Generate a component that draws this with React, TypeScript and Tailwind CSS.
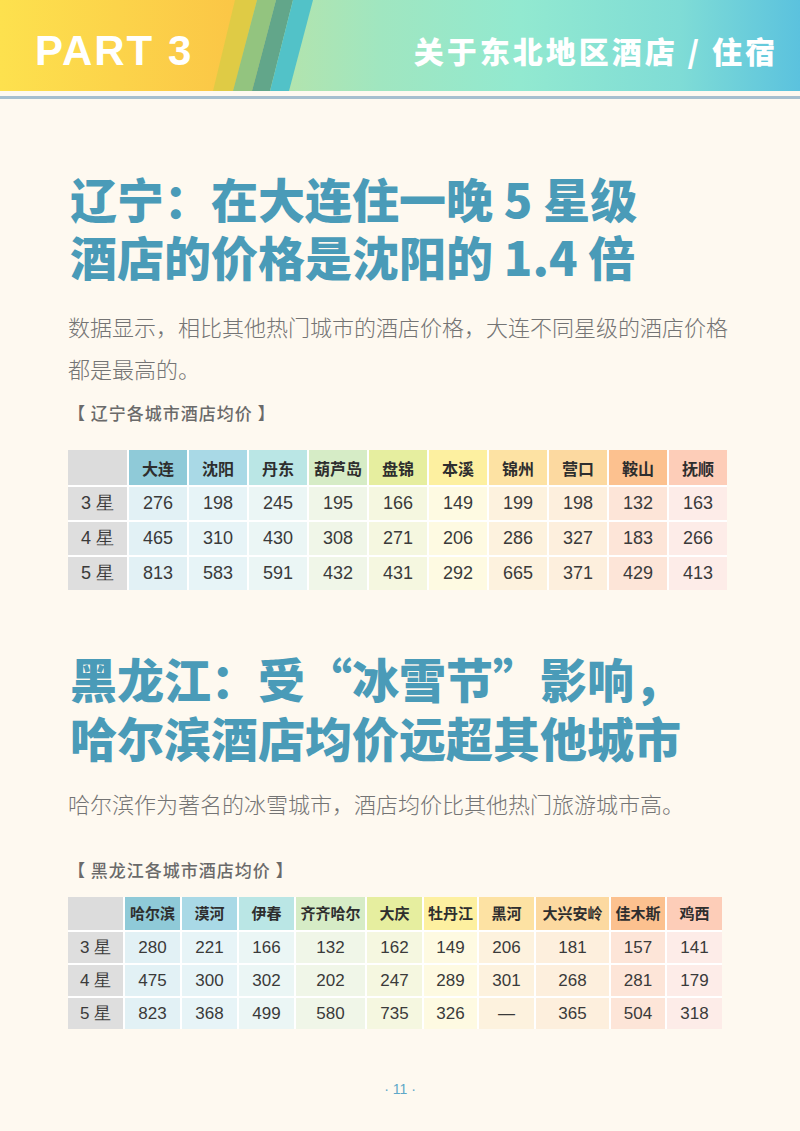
const liaoning = {
  cols: [
    { name: '大连', head: 'bg-[#8fcad8]', body: 'bg-[#e2f1f5]' },
    { name: '沈阳', head: 'bg-[#a9d9e6]', body: 'bg-[#e7f4f7]' },
    { name: '丹东', head: 'bg-[#bae6e5]', body: 'bg-[#ebf6f5]' },
    { name: '葫芦岛', head: 'bg-[#d6ecc6]', body: 'bg-[#f0f6e8]' },
    { name: '盘锦', head: 'bg-[#e6ee9f]', body: 'bg-[#f5f7e0]' },
    { name: '本溪', head: 'bg-[#fdf0a0]', body: 'bg-[#fefae2]' },
    { name: '锦州', head: 'bg-[#fde2a3]', body: 'bg-[#fdf2de]' },
    { name: '营口', head: 'bg-[#fcd9a0]', body: 'bg-[#fdefdd]' },
    { name: '鞍山', head: 'bg-[#fcc18f]', body: 'bg-[#fde5d8]' },
    { name: '抚顺', head: 'bg-[#fdcdb8]', body: 'bg-[#fdece8]' },
  ],
  rows: [
    ['3 星', '276', '198', '245', '195', '166', '149', '199', '198', '132', '163'],
    ['4 星', '465', '310', '430', '308', '271', '206', '286', '327', '183', '266'],
    ['5 星', '813', '583', '591', '432', '431', '292', '665', '371', '429', '413'],
  ],
};

const heilongjiang = {
  cols: [
    { name: '哈尔滨', head: 'bg-[#8fcad8]', body: 'bg-[#e2f1f5]' },
    { name: '漠河', head: 'bg-[#a9d9e6]', body: 'bg-[#e7f4f7]' },
    { name: '伊春', head: 'bg-[#bae6e5]', body: 'bg-[#ebf6f5]' },
    { name: '齐齐哈尔', head: 'bg-[#d6ecc6]', body: 'bg-[#f0f6e8]' },
    { name: '大庆', head: 'bg-[#e6ee9f]', body: 'bg-[#f5f7e0]' },
    { name: '牡丹江', head: 'bg-[#fdf0a0]', body: 'bg-[#fefae2]' },
    { name: '黑河', head: 'bg-[#fde2a3]', body: 'bg-[#fdf2de]' },
    { name: '大兴安岭', head: 'bg-[#fcd9a0]', body: 'bg-[#fdefdd]' },
    { name: '佳木斯', head: 'bg-[#fcc18f]', body: 'bg-[#fde5d8]' },
    { name: '鸡西', head: 'bg-[#fdcdb8]', body: 'bg-[#fdece8]' },
  ],
  rows: [
    ['3 星', '280', '221', '166', '132', '162', '149', '206', '181', '157', '141'],
    ['4 星', '475', '300', '302', '202', '247', '289', '301', '268', '281', '179'],
    ['5 星', '823', '368', '499', '580', '735', '326', '—', '365', '504', '318'],
  ],
};

type TableData = typeof liaoning;

function PriceTable({
  data,
  gridCols,
  headH,
  rowH,
  headText,
  bodyText,
}: {
  data: TableData;
  gridCols: string;
  headH: string;
  rowH: string;
  headText: string;
  bodyText: string;
}) {
  return (
    <div className={`grid ${gridCols} gap-[2px] bg-white w-max`}>
      <div className={`${headH} bg-[#dcdcdc]`} />
      {data.cols.map((c) => (
        <div
          key={c.name}
          className={`${headH} ${c.head} ${headText} flex items-center justify-center font-bold text-[#2e2e2e] whitespace-nowrap`}
        >
          {c.name}
        </div>
      ))}
      {data.rows.map((r) =>
        r.map((v, i) => (
          <div
            key={r[0] + i}
            className={`${rowH} ${i === 0 ? 'bg-[#dedede]' : data.cols[i - 1].body} ${bodyText} flex items-center justify-center text-[#3a3a3a]`}
          >
            {v}
          </div>
        ))
      )}
    </div>
  );
}

function Header() {
  return (
    <div className="relative h-[91px] bg-[linear-gradient(90deg,#fde14e_0px,#fbc646_236px,#b2e4ae_289px,#a0e6c0_380px,#92e9d0_520px,#7fdcd6_680px,#5bc2de_800px)]">
      <svg className="absolute inset-0" width="800" height="91" viewBox="0 0 800 91">
        <polygon points="235,0 257,0 233,91 213,91" fill="#dfcb45" />
        <polygon points="257,0 276,0 252,91 233,91" fill="#93c47f" />
        <polygon points="276,0 293,0 270,91 252,91" fill="#62a68a" />
        <polygon points="293,0 313,0 289,91 270,91" fill="#52c2c8" />
      </svg>
      <div className="relative h-full flex items-center justify-between pl-[35px] pr-[22px]">
        <div className="text-white text-[42px] font-black tracking-[2px] font-['Liberation_Sans',sans-serif] leading-none pt-[10px]">
          PART 3
        </div>
        <div className="text-white text-[30px] font-black tracking-[3px] font-['Noto_Sans_CJK_SC',sans-serif] leading-none pt-[8px]">
          关于东北地区酒店 / 住宿
        </div>
      </div>
    </div>
  );
}

function Heading({ lines, leading }: { lines: string[]; leading: string }) {
  return (
    <h1 className={`text-[47px] ${leading} font-black text-[#4a9bb8] pl-[2px]`}>
      {lines.map((l) => (
        <div key={l}>{l}</div>
      ))}
    </h1>
  );
}

export default function App() {
  return (
    <div className="w-[800px] h-[1131px] bg-[#fef9f0] font-['Noto_Sans_CJK_SC',sans-serif] overflow-hidden">
      <Header />
      <div className="mt-[5px] h-[3px] bg-[#a6bfcf]" />

      <div className="pl-[68px] flex flex-col">
        {/* Liaoning */}
        <div className="mt-[70px]">
          <Heading lines={['辽宁：在大连住一晚 5 星级', '酒店的价格是沈阳的 1.4 倍']} leading="leading-[58px]" />
        </div>
        <p className="mt-[20px] text-[22px] leading-[42px] font-light text-[#747474]">
          数据显示，相比其他热门城市的酒店价格，大连不同星级的酒店价格
          <br />
          都是最高的。
        </p>
        <div className="mt-[12px] text-[17px] leading-[24px] font-medium tracking-[1px] text-[#6a6a6a]">
          【 辽宁各城市酒店均价 】
        </div>
        <div className="mt-[25px]">
          <PriceTable
            data={liaoning}
            gridCols="grid-cols-[59px_repeat(10,58px)]"
            headH="h-[35px]"
            rowH="h-[33px]"
            headText="text-[16px]"
            bodyText="text-[18px] font-['Liberation_Sans',sans-serif]"
          />
        </div>

        {/* Heilongjiang */}
        <div className="mt-[58px]">
          <Heading lines={['黑龙江：受“冰雪节”影响，', '哈尔滨酒店均价远超其他城市']} leading="leading-[59px]" />
        </div>
        <p className="mt-[16px] text-[22px] leading-[42px] font-light text-[#747474]">
          哈尔滨作为著名的冰雪城市，酒店均价比其他热门旅游城市高。
        </p>
        <div className="mt-[34px] text-[17px] leading-[24px] font-medium tracking-[1px] text-[#6a6a6a]">
          【 黑龙江各城市酒店均价 】
        </div>
        <div className="mt-[15px]">
          <PriceTable
            data={heilongjiang}
            gridCols="grid-cols-[55px_55px_55px_55px_69px_55px_53px_55px_73px_54px_55px]"
            headH="h-[33px]"
            rowH="h-[31px]"
            headText="text-[15px]"
            bodyText="text-[17px] font-['Liberation_Sans',sans-serif]"
          />
        </div>
      </div>

      <div className="mt-[50px] text-center text-[14px] text-[#5fa8c8] font-['Liberation_Sans',sans-serif]">
        · 11 ·
      </div>
    </div>
  );
}
